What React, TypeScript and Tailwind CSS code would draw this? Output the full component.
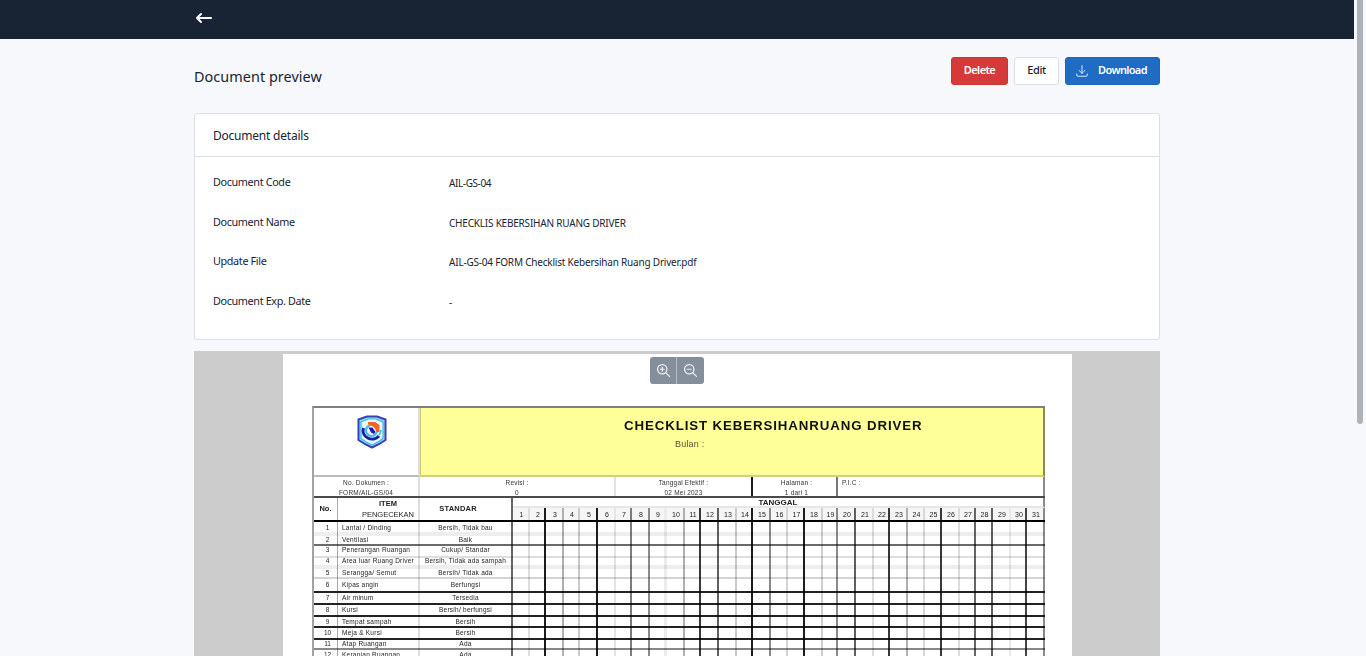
import React from "react";

type Day = { w: string; line: string };

const days: Day[] = [
  { w: "w-[17px]", line: "border-r-2 border-[#dddddd]" },
  { w: "w-[16px]", line: "border-r-2 border-[#1c1c1c]" },
  { w: "w-[18px]", line: "border-r-2 border-[#b0b0b0]" },
  { w: "w-[16px]", line: "border-r-2 border-[#cacaca]" },
  { w: "w-[18px]", line: "border-r-2 border-[#1c1c1c]" },
  { w: "w-[18px]", line: "border-r-2 border-[#e4e4e4]" },
  { w: "w-[16px]", line: "border-r-2 border-[#7c7c7c]" },
  { w: "w-[18px]", line: "border-r-2 border-[#8a8a8a]" },
  { w: "w-[17px]", line: "border-r-[3px] border-[#ececec]" },
  { w: "w-[18px]", line: "border-r-2 border-[#b0b0b0]" },
  { w: "w-[16px]", line: "border-r-2 border-[#383838]" },
  { w: "w-[18px]", line: "border-r-2 border-[#606060]" },
  { w: "w-[18px]", line: "border-r-2 border-[#cacaca]" },
  { w: "w-[16px]", line: "border-r-2 border-[#1c1c1c]" },
  { w: "w-[18px]", line: "border-r-2 border-[#8a8a8a]" },
  { w: "w-[17px]", line: "border-r-2 border-[#d4d4d4]" },
  { w: "w-[17px]", line: "border-r-2 border-[#1c1c1c]" },
  { w: "w-[18px]", line: "border-r-2 border-[#cfcfcf]" },
  { w: "w-[15px]", line: "border-r-2 border-[#8a8a8a]" },
  { w: "w-[18px]", line: "border-r-2 border-[#606060]" },
  { w: "w-[18px]", line: "border-r-2 border-[#dcdcdc]" },
  { w: "w-[16px]", line: "border-r-2 border-[#383838]" },
  { w: "w-[18px]", line: "border-r-2 border-[#b0b0b0]" },
  { w: "w-[17px]", line: "border-r-2 border-[#d8d8d8]" },
  { w: "w-[17px]", line: "border-r-2 border-[#383838]" },
  { w: "w-[18px]", line: "border-r-2 border-[#dcdcdc]" },
  { w: "w-[16px]", line: "border-r-2 border-[#666666]" },
  { w: "w-[17px]", line: "border-r-2 border-[#606060]" },
  { w: "w-[18px]", line: "border-r-2 border-[#e8e8e8]" },
  { w: "w-[16px]", line: "border-r-2 border-[#444444]" },
  { w: "w-[18px]", line: "border-r-2 border-[#8a8a8a]" },
];

type Item = { h: string; line: string; name: string; std: string };

const items: Item[] = [
  { h: "h-[14px] leading-[11px]", line: "h-1 -mt-1 bg-[#eeeeee]", name: "Lantai / Dinding", std: "Bersih, Tidak bau" },
  { h: "h-[10px] leading-[7px]", line: "h-0.5 -mt-0.5 bg-[#6a6a6a]", name: "Ventilasi", std: "Baik" },
  { h: "h-[12px] leading-[8px]", line: "h-0.5 -mt-0.5 bg-[#dedede]", name: "Penerangan Ruangan", std: "Cukup/ Standar" },
  { h: "h-[11px] leading-[6px]", line: "h-1 -mt-1 bg-[#eeeeee]", name: "Area luar Ruang Driver", std: "Bersih, Tidak ada sampah" },
  { h: "h-[10px] leading-[7px]", line: "h-0.5 -mt-0.5 bg-[#d4d4d4]", name: "Serangga/ Semut", std: "Bersih/ Tidak ada" },
  { h: "h-[14px] leading-[12px]", line: "h-0.5 -mt-0.5 bg-[#222222]", name: "Kipas angin", std: "Berfungsi" },
  { h: "h-[12px] leading-[9px]", line: "h-0.5 -mt-0.5 bg-[#222222]", name: "Air minum", std: "Tersedia" },
  { h: "h-[12px] leading-[9px]", line: "h-0.5 -mt-0.5 bg-[#222222]", name: "Kursi", std: "Bersih/ berfungsi" },
  { h: "h-[11px] leading-[9px]", line: "h-0.5 -mt-0.5 bg-[#222222]", name: "Tempat sampah", std: "Bersih" },
  { h: "h-[12px] leading-[10px]", line: "h-0.5 -mt-0.5 bg-[#222222]", name: "Meja & Kursi", std: "Bersih" },
  { h: "h-[10px] leading-[8px]", line: "h-0.5 -mt-0.5 bg-[#888888]", name: "Atap Ruangan", std: "Ada" },
  { h: "h-[12px] leading-[9px]", line: "h-0.5 -mt-0.5 bg-[#dedede]", name: "Kerapian Ruangan", std: "Ada" },
];

const details = [
  { label: "Document Code", value: "AIL-GS-04", fit: "tracking-[-0.4px]" },
  { label: "Document Name", value: "CHECKLIS KEBERSIHAN RUANG DRIVER", fit: "tracking-[-0.21px]" },
  { label: "Update File", value: "AIL-GS-04 FORM Checklist Kebersihan Ruang Driver.pdf", fit: "tracking-[-0.2px]" },
  { label: "Document Exp. Date", value: "-", fit: "" },
];

function Button({ className, children }: { className: string; children: React.ReactNode }) {
  return (
    <button className={`flex h-7 items-center justify-center rounded-[3px] border pb-[3px] text-[11px] leading-none ${className}`}>
      {children}
    </button>
  );
}

function ZoomIcon({ plus }: { plus?: boolean }) {
  return (
    <svg width="15" height="15" viewBox="0 0 24 24" fill="none" stroke="#f1f4f7" strokeWidth="1.9" strokeLinecap="round" strokeLinejoin="round">
      <circle cx="10" cy="10" r="7.500" />
      <path d="M7 10h6M21.500 21.500l-6-6" />
      {plus && <path d="M10 7v6" />}
    </svg>
  );
}

function Shield() {
  return (
    <svg width="30" height="34" viewBox="0 0 30 34">
      <path d="M1.500 4.500L10 1.500H20L28.500 4.500V25Q23 29 15 32.500Q7 29 1.500 25Z" fill="#8fe4f4" stroke="#3b3db2" strokeWidth="2" />
      <path d="M4 7L11 4H19L26 7V23.500Q22 27 15 30Q8 27 4 23.500Z" fill="#e9fbff" stroke="#35b8df" strokeWidth="1.200" />
      <path d="M6.500 13A9 8.500 0 0 0 22 21" fill="none" stroke="#1a1da8" strokeWidth="3" />
      <path d="M22 20A9 9 0 0 0 24 15" fill="none" stroke="#42bce8" strokeWidth="1.600" />
      <circle cx="14.500" cy="15.500" r="5.500" fill="#ffffff" stroke="#42bce8" strokeWidth="2.200" />
      <path d="M11 7H18L22.500 10V17H19.500Q18 10.500 11 9.500Z" fill="#f4641e" />
      <path d="M11.500 12.500H15.500L18.500 17L17 19L14 17.500Z" fill="#1a1da8" />
    </svg>
  );
}

function Meta({ className, top, bottom }: { className: string; top: string; bottom: string }) {
  return (
    <div className={`flex shrink-0 flex-col pt-px text-center text-[6.5px] leading-[10px] tracking-[0.2px] text-[#333] ${className}`}>
      <span>{top}</span>
      <span>{bottom}</span>
    </div>
  );
}

function Checklist() {
  return (
    <div className="ml-[29px] mt-[52px] flex w-[733px] flex-col border-l-2 border-t-2 border-l-[#a2a2a2] border-t-[#7f7f7f] font-['Liberation_Sans',sans-serif] text-[#222]">
      <div className="flex h-[69px]">
        <div className="flex w-[106px] shrink-0 justify-center border-b-2 border-r-2 border-b-[#bcbcbc] border-r-[#dddddd] pl-[12px] pt-[7px]">
          <Shield />
        </div>
        <div className="flex grow flex-col border-b-2 border-l border-r-2 border-b-[#d0d080] border-l-[#c6c67c] border-r-[#88885c] bg-[#ffff99]">
          <div className="ml-[203px] mt-[10px] whitespace-nowrap text-[13.300px] font-bold leading-[16px] tracking-[0.88px] text-[#111]">
            CHECKLIST KEBERSIHANRUANG DRIVER
          </div>
          <div className="ml-[254px] mt-[5px] text-[9px] leading-[10px] tracking-[0.200px] text-[#55552f]">Bulan :</div>
        </div>
      </div>
      <div className="flex h-[21px] border-b-2 border-[#4a4a4a]">
        <Meta className="w-[106px] border-r-2 border-[#dddddd]" top="No. Dokumen :" bottom="FORM/AIL-GS/04" />
        <Meta className="w-[196px] border-r-2 border-[#e4e4e4]" top="Revisi :" bottom="0" />
        <Meta className="w-[137px] border-r-2 border-[#1c1c1c]" top="Tanggal Efektif :" bottom="02 Mei 2023" />
        <Meta className="w-[85px] border-r-2 border-[#777777] pl-1" top="Halaman :" bottom="1 dari 1" />
        <Meta className="w-[207px] border-r-2 border-[#8a8a8a] pl-1 !text-left" top="P.I.C :" bottom="" />
      </div>
      <div className="flex h-6 border-b-2 border-black text-[7px] font-bold">
        <div className="flex w-[24px] shrink-0 items-center justify-center border-r border-[#aaaaaa] text-[7.500px]">No.</div>
        <div className="w-[82px] shrink-0 border-r-2 border-[#dddddd] pl-5 text-center text-[7.500px] leading-[11px]">
          ITEM
          <div className="font-normal">PENGECEKAN</div>
        </div>
        <div className="flex w-[93px] shrink-0 items-center justify-center border-r-2 border-[#666666] pr-[15px] text-[7.500px] tracking-[0.2px]">STANDAR</div>
        <div className="flex grow flex-col">
          <div className="flex h-2.5 justify-center border-b-2 border-r-2 border-b-[#e6e6e6] border-r-[#8a8a8a] text-[8px] leading-[9px]">TANGGAL</div>
          <div className="flex h-3 bg-[#f6f6f6] font-normal">
            {days.map((d, i) => (
              <div key={i} className={`shrink-0 pl-0.5 text-center text-[7px] leading-[13px] ${d.w} ${d.line}`}>
                {i + 1}
              </div>
            ))}
          </div>
        </div>
      </div>
      {items.map((it, n) => (
        <div key={n} className="flex flex-col">
          <div className={`flex text-[6.500px] ${it.h}`}>
            <div className="w-[24px] shrink-0 border-r border-[#aaaaaa] pl-1 text-center">{n + 1}</div>
            <div className="w-[82px] shrink-0 whitespace-nowrap border-r-2 border-[#dddddd] pl-1 tracking-[0.250px]">{it.name}</div>
            <div className="w-[93px] shrink-0 whitespace-nowrap border-r-2 border-[#666666] text-center tracking-[0.250px]">{it.std}</div>
            {days.map((d, i) => (
              <div key={i} className={`shrink-0 ${d.w} ${d.line}`} />
            ))}
          </div>
          <div className={`mix-blend-multiply ${it.line}`} />
        </div>
      ))}
    </div>
  );
}

export default function App() {
  return (
    <div className="flex h-[656px] w-[1366px] overflow-hidden bg-[#f6f8fc] font-['Noto_Sans',sans-serif] text-[#182433]">
      <div className="flex w-[1354px] shrink-0 flex-col">
        <header className="flex h-[39px] shrink-0 items-center bg-[#182433] pb-[3px] pl-[194px]">
          <svg width="20" height="20" viewBox="0 0 20 20" fill="none" stroke="#fff" strokeWidth="2" strokeLinecap="round" strokeLinejoin="round">
            <path d="M3 10h14M7 6l-4 4 4 4" />
          </svg>
        </header>
        <main className="ml-[194px] flex w-[966px] grow flex-col">
          <div className="flex h-[74px] shrink-0 items-start pt-[18px]">
            <h1 className="grow pt-[10px] text-[14.400px] leading-5 tracking-[0.060px]">Document preview</h1>
            <div className="flex gap-1.5">
              <Button className="w-[57px] border-[#cc3536] bg-[#d63939] font-semibold tracking-[-0.6px] text-white">Delete</Button>
              <Button className="w-[45px] border-[#dadfe5] bg-white font-medium tracking-[-0.4px]">Edit</Button>
              <Button className="w-[95px] gap-[9px] border-[#1f66bb] bg-[#206bc4] pr-[3px] font-semibold tracking-[-0.65px] text-white">
                <svg className="mt-0.5" width="14" height="14" viewBox="0 0 24 24" fill="none" stroke="#dbe8f7" strokeWidth="1.700" strokeLinecap="round" strokeLinejoin="round">
                  <path d="M3 17v2a2 2 0 0 0 2 2h14a2 2 0 0 0 2-2v-2M7 11l5 5 5-5M12 3v13" />
                </svg>
                Download
              </Button>
            </div>
          </div>
          <section className="flex h-[227px] shrink-0 flex-col rounded-[3px] border border-[#dadfe5] bg-white">
            <h2 className="h-[43px] border-b border-[#dadfe5] pl-[18px] pt-[13px] text-[12px] leading-[18px] tracking-[-0.220px]">Document details</h2>
            <dl className="flex flex-col pl-[18px] pt-4">
              {details.map((d) => (
                <div key={d.label} className="flex h-[39.700px] text-[10.800px] leading-[18px]">
                  <dt className="w-[236px] tracking-[-0.350px]">{d.label}</dt>
                  <dd className={`whitespace-nowrap pt-px text-[10px] ${d.fit}`}>{d.value}</dd>
                </div>
              ))}
            </dl>
          </section>
          <section className="relative mt-[11px] flex grow flex-col overflow-hidden bg-[#cccccc] pt-[3px]">
            <div className="isolate ml-[89px] w-[789px] grow bg-white">
              <Checklist />
            </div>
            <div className="absolute left-[456px] top-[6px] flex h-[27px] w-[54px] overflow-hidden rounded-[3px] bg-[#858f9c]">
              <button className="flex w-[27px] items-center justify-center border-r border-[#b3bac3]"><ZoomIcon plus /></button>
              <button className="flex w-[27px] items-center justify-center pr-px"><ZoomIcon /></button>
            </div>
          </section>
        </main>
      </div>
      <div className="flex w-3 shrink-0 pl-[3px]">
        <div className="h-[424px] w-1.5 rounded-b-full rounded-t-[2px] bg-[#adb3ba]" />
      </div>
    </div>
  );
}
